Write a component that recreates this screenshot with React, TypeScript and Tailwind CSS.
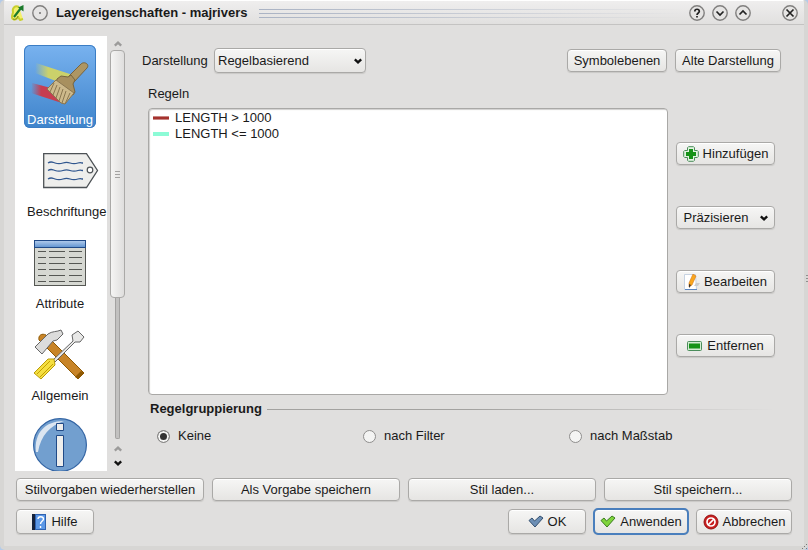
import React from "react";

const btn =
  "flex items-center justify-center rounded-[4px] border border-[#aaa9a7] bg-linear-to-b from-[#f6f6f5] to-[#e6e5e3] shadow-[inset_0_1px_0_#fff,0_1px_1px_#c9c8c6] whitespace-nowrap text-[13px] leading-4";

const small = btn + " h-[23px]";
const large = btn + " h-[25px]";

function Chevron({ up = false, color = "#111" }: { up?: boolean; color?: string }) {
  return (
    <svg width="8" height="6" viewBox="0 0 8 6" aria-hidden="true">
      <path d={up ? "M.8 4.700 4 1.700 7.200 4.700" : "M.8 1.300 4 4.300 7.200 1.300"} fill="none" stroke={color} strokeWidth="2.4" />
    </svg>
  );
}

function LogoIcon() {
  return (
    <svg width="16" height="18" viewBox="0 0 16 18" aria-hidden="true">
      <path
        d="M10 3C6 1 3 4 4 8c0 2-1 2-1 5 0 4 5 3 6 0l2 3 3-1"
        fill="#f4f06a"
        stroke="#c9cf2c"
        strokeWidth="2"
        strokeLinejoin="round"
      />
      <path d="M5 13 12 4" stroke="#1c7a2b" strokeWidth="2.2" />
      <path d="M14.500 1v6.500L9 3.500Z" fill="#1c7a2b" />
      <path d="M4 15c2 1 4 0 5-3" fill="none" stroke="#7d8a2a" />
    </svg>
  );
}

function TitleButton({ label, children }: { label: string; children: React.ReactNode }) {
  return (
    <button type="button" aria-label={label} className="size-4 shrink-0">
      <svg width="16" height="16" viewBox="0 0 16 16" aria-hidden="true">
        <circle cx="8" cy="8" r="7.200" fill="#e6e5e4" stroke="#807f7e" strokeWidth="1.400" />
        <g fill="none" stroke="#222" strokeWidth="1.700">
          {children}
        </g>
      </svg>
    </button>
  );
}

function BrushIcon() {
  return (
    <svg width="58" height="54" viewBox="0 -10 58 54" aria-hidden="true">
      <defs>
        <linearGradient id="yellow">
          <stop offset="0" stopColor="#cbd16b" stopOpacity="0" />
          <stop offset="0.35" stopColor="#cbd16b" />
        </linearGradient>
        <linearGradient id="red">
          <stop offset="0" stopColor="#c63d50" stopOpacity="0" />
          <stop offset="0.3" stopColor="#c63d50" />
        </linearGradient>
      </defs>
      <path d="M5 1 42 13 38 24 4 11Z" fill="url(#yellow)" />
      <path d="M1 21 20 26 34 42 0 31Z" fill="url(#red)" />
      <path d="M38 14 50 2C53-1 59 2 56 6L43 20Z" fill="#ad9664" stroke="#776440" />
      <path d="M26 17 30 14 37 15 40 13 44 18 42 22 44 30 42 33 34 30 25 21Z" fill="#a8905f" stroke="#776440" />
      <path d="M25 18 43 31 34 42 30 41 16 27Z" fill="#cdb98b" stroke="#8a7650" />
      <path d="m23 21-4 9m7-7-4 10m7-8-4 11m7-9-4 12m7-10-4 12m8-10-5 11" stroke="#8a7650" />
    </svg>
  );
}

function LabelIcon() {
  const wave = "c3-2 4-1 7 0s5 1 8 0 4-1 7 0 5 1 8 0 3 0 5 0";
  return (
    <svg width="56" height="36" viewBox="0 0 56 36" aria-hidden="true">
      <path d="M.7.700H43.500L54.500 17.500 43.500 34.500H.7Z" fill="#eeeeec" stroke="#4d5256" strokeWidth="1.300" />
      <circle cx="47" cy="17" r="2.800" fill="#fff" stroke="#4d5256" strokeWidth="1.200" />
      <path d={"M5 10" + wave + "M5 17.500" + wave + "M5 26" + wave} fill="none" stroke="#31578f" strokeWidth="1.300" />
    </svg>
  );
}

function TableIcon() {
  return (
    <svg width="52" height="46" viewBox="0 0 52 46" aria-hidden="true">
      <defs>
        <linearGradient id="head" x2="0" y2="1">
          <stop offset="0" stopColor="#b4cdec" />
          <stop offset="1" stopColor="#5f93d0" />
        </linearGradient>
      </defs>
      <rect x="0.500" y="0.500" width="51" height="45" fill="#d6d8d2" stroke="#555753" />
      <rect x="0.500" y="0.500" width="51" height="7" fill="url(#head)" stroke="#204a87" />
      {[11.5, 17.5, 23.5, 29.5, 35.5, 41.5].map((y) => (
        <path key={y} d={`M4 ${y}H12M15 ${y}H31M35 ${y}H48`} stroke="#555753" />
      ))}
    </svg>
  );
}

function ToolsIcon() {
  return (
    <svg width="52" height="52" viewBox="0 0 52 52" aria-hidden="true">
      <path d="M5 11C4 6 8 4 12 6L50 44 44 50Z" fill="#c88427" stroke="#8f5902" />
      <path d="M44 50 50 44 47 42 41 48Z" fill="#8f5902" />
      <path d="M1 18 14 5C18 2 23 3 27 1L29 5 23 11 19 12 8 25Z" fill="#dcdcdb" stroke="#666" />
      <path d="M19 31 39 12 38 6 44 2 50 8 46 13 41 13 21 33Z" fill="#e8e8e7" stroke="#666" />
      <path d="M0 44 14 30 20 30 21 36 7 50Z" fill="#f5df42" stroke="#b99b08" />
      <path d="M3 45 16 32M6 48 19 35" stroke="#c4a000" />
    </svg>
  );
}

function InfoIcon() {
  return (
    <svg width="54" height="54" viewBox="0 0 54 54" className="shrink-0" aria-hidden="true">
      <circle cx="27" cy="27" r="26.400" fill="#729fcf" stroke="#3465a4" strokeWidth="1.200" />
      <path d="M3 34C1 15 12 3 31 3 17 8 8 17 5 34Z" fill="#dce6f1" />
      <path d="M23.500 5.500h7v7h-7ZM23.500 17.500h7v31h-7Z" fill="#eeeeec" stroke="#204a87" />
    </svg>
  );
}

function PlusIcon() {
  return (
    <svg width="16" height="16" viewBox="0 0 16 16" aria-hidden="true">
      <path
        d="M5.500.700h5l1 1v2.800h2.800l1 1v5l-1 1h-2.800v2.800l-1 1h-5l-1-1v-2.800H1.700l-1-1v-5l1-1h2.800V1.700Z"
        fill="#e2f3e1"
        stroke="#4b8d5b"
      />
      <path d="M6 3h4v3h3v4h-3v3H6v-3H3V6h3Z" fill="#159317" />
    </svg>
  );
}

function EditIcon() {
  return (
    <svg width="16" height="16" viewBox="0 0 16 16" aria-hidden="true">
      <path d="M.5.500h11l1 15H.5Z" fill="#fff" stroke="#c7d3e2" />
      <path d="M1 15.500h12" stroke="#5c86c0" />
      <path d="M12 9h4l-2 3h-4Z" fill="#ccc" />
      <path d="M5 9 9 0 12 2 8 11 5 13Z" fill="#f9a61d" stroke="#d5781b" strokeWidth=".6" />
      <path d="m5 10 2 1-2 3Z" fill="#333" />
    </svg>
  );
}

function MinusIcon() {
  return (
    <svg width="16" height="10" viewBox="0 0 16 10" aria-hidden="true">
      <rect x="0.500" y="0.500" width="14" height="9" rx="1" fill="#d3ecd2" stroke="#4b8d5b" />
      <path d="M2 2.500h11v5H2Z" fill="#159317" />
    </svg>
  );
}

function HelpIcon() {
  return (
    <svg width="15" height="16" viewBox="0 0 15 16" aria-hidden="true">
      <rect x="0" y="0" width="14" height="16" fill="#2f62b0" />
      <rect x="0" y="0" width="3" height="16" fill="#16233c" />
      <path d="M4 1h9v14H4Z" fill="#5c98e6" />
      <path d="M6 5c0-3 5.500-3 5.500 0 0 2-3 2-3 5M8.500 12v2" fill="none" stroke="#fff" strokeWidth="1.400" />
    </svg>
  );
}

function CheckIcon({ fill, stroke }: { fill: string; stroke: string }) {
  return (
    <svg width="16" height="13" viewBox="0 0 16 13" aria-hidden="true">
      <path d="M1 5.500 4 3 6.500 6 12 1 15 3 7 12Z" fill={fill} stroke={stroke} strokeLinejoin="round" />
    </svg>
  );
}

function CancelIcon() {
  return (
    <svg width="16" height="16" viewBox="0 0 16 16" aria-hidden="true">
      <circle cx="8" cy="8" r="7" fill="#c81e1e" stroke="#961111" />
      <circle cx="8" cy="8" r="4" fill="none" stroke="#fff" strokeWidth="1.700" />
      <path d="m5 11 6-6" stroke="#fff" strokeWidth="1.700" />
    </svg>
  );
}

const pages = [
  { name: "Darstellung", icon: <BrushIcon />, wide: false },
  { name: "Beschriftunge", icon: <LabelIcon />, wide: true },
  { name: "Attribute", icon: <TableIcon />, wide: false },
  { name: "Allgemein", icon: <ToolsIcon />, wide: false },
];

export default function App() {
  return (
    <div className="relative h-screen bg-[#b4cbe8] font-['Liberation_Sans',Arial,sans-serif] text-[13px] leading-4 text-[#1a1a1a]">
      <div className="flex h-full flex-col overflow-hidden rounded-[5px] border-x-4 border-b-4 border-[#d7d6d4] bg-[#e0dfde]">
        <header className="-mx-1 flex h-[25px] shrink-0 items-center border-t border-b border-t-white border-b-[#c4c3c2] bg-linear-to-b from-[#efeeee] to-[#e1e0df] pr-[10px] pl-[9px]">
          <LogoIcon />
          <span className="ml-[7px] flex">
            <TitleButton label="Menü">
              <circle cx="8" cy="8" r="0.200" />
            </TitleButton>
          </span>
          <h1 className="ml-2 font-bold">Layereigenschaften - majrivers</h1>
          <div className="mr-[5px] ml-3 flex flex-1 flex-col gap-[3px] pt-px">
            <i className="h-px bg-linear-to-r from-[#aab3c4] to-transparent" />
            <i className="h-px bg-linear-to-r from-[#aab3c4] to-transparent" />
            <i className="h-px bg-linear-to-r from-[#aab3c4] to-transparent" />
          </div>
          <div className="flex gap-[7px]">
            <TitleButton label="Hilfe">
              <path d="M5.800 6.500c0-3 4.500-3 4.500 0C10.300 8 8 8 8 10M8 11v1.500" />
            </TitleButton>
            <TitleButton label="Minimieren">
              <path d="m4.500 6.500 3.500 3.500 3.500-3.500" />
            </TitleButton>
            <TitleButton label="Maximieren">
              <path d="m4.500 9.500 3.500-3.500 3.500 3.500" />
            </TitleButton>
          </div>
          <div className="ml-[31px] flex">
            <TitleButton label="Schließen">
              <path d="m4.500 4.500 7 7m0-7-7 7" />
            </TitleButton>
          </div>
        </header>

        <main className="flex min-h-0 flex-1 pt-[11px] pr-[23px] pl-[11px]">
          <nav className="flex w-[92px] shrink-0 flex-col items-start gap-[9px] overflow-hidden bg-white pt-[9px] pl-[9px]">
            {pages.map((p, i) => (
              <button
                type="button"
                key={p.name}
                className={
                  "flex h-[83px] shrink-0 flex-col rounded-[6px] pl-[3px] " +
                  (p.wide ? "items-start " : "w-[72px] items-center pr-[3px] ") +
                  (i === 0
                    ? "bg-linear-to-b from-[#78b2ef] to-[#3e84cb] text-white shadow-[inset_0_0_0_1px_#3b7dc4]"
                    : "")
                }
              >
                <span className={"flex min-h-0 flex-1 items-center " + (p.wide ? "pl-4" : "")}>{p.icon}</span>
                <span>{p.name}</span>
              </button>
            ))}
            <button type="button" aria-label="Metadaten" className="flex h-[83px] w-[72px] shrink-0 justify-center pt-[5px]">
              <InfoIcon />
            </button>
          </nav>

          <div className="ml-[3px] flex w-[15px] shrink-0 flex-col items-center pt-[5px] pb-[5px]">
            <button type="button" aria-label="Nach oben" className="pb-[3px]">
              <Chevron up color="#9c9b9a" />
            </button>
            <div className="flex w-full flex-1 flex-col items-center">
              <div className="flex h-[248px] w-full flex-col items-center justify-center gap-[2px] rounded-[4px] border border-[#aaa9a7] bg-linear-to-r from-[#f5f5f4] to-[#dfdedd]">
                <i className="h-px w-[5px] bg-[#a3a2a1]" />
                <i className="h-px w-[5px] bg-[#a3a2a1]" />
                <i className="h-px w-[5px] bg-[#a3a2a1]" />
              </div>
              <div className="w-[5px] flex-1 rounded-b-[2px] border border-t-0 border-[#a3a2a1] bg-[#c2c1c0]" />
            </div>
            <button type="button" aria-label="Nach oben blättern" className="pt-[7px]">
              <Chevron up color="#9c9b9a" />
            </button>
            <button type="button" aria-label="Nach unten" className="pt-[8px]">
              <Chevron />
            </button>
          </div>

          <div className="ml-[17px] flex min-w-0 flex-1 flex-col pt-3">
            <div className="flex h-[25px] items-center">
              <label htmlFor="renderer" className="w-[72px]">
                Darstellung
              </label>
              <div className="relative">
                <select id="renderer" className={large + " w-[152px] appearance-none pl-[3px]"}>
                  <option>Regelbasierend</option>
                </select>
                <span className="pointer-events-none absolute inset-y-0 right-[4px] flex items-center">
                  <Chevron />
                </span>
              </div>
              <div className="ml-auto flex gap-2">
                <button type="button" className={small + " w-[100px]"}>Symbolebenen</button>
                <button type="button" className={small + " w-[106px]"}>Alte Darstellung</button>
              </div>
            </div>

            <div className="flex min-h-0 flex-1 flex-col px-[6px] pt-[13px]">
              <h2 className="pb-[6px]">Regeln</h2>
              <div className="flex min-h-0 flex-1 gap-2">
                <ul className="flex-1 rounded-[4px] border border-[#a9a8a6] bg-white pt-px pl-1 shadow-[inset_1px_1px_1px_#d0cfce]">
                  <li className="flex items-center gap-[6px]">
                    <i className="h-1 w-4 border-y border-[#c98784] bg-[#a5322e]" />
                    LENGTH &gt; 1000
                  </li>
                  <li className="flex items-center gap-[6px]">
                    <i className="h-1 w-4 bg-[#8cfbd6]" />
                    LENGTH &lt;= 1000
                  </li>
                </ul>
                <div className="flex w-[99px] flex-col gap-[41px] pt-[34px]">
                  <button type="button" className={small + " gap-1"}>
                    <PlusIcon />
                    Hinzufügen
                  </button>
                  <button type="button" className={small + " gap-[11px]"}>
                    Präzisieren
                    <Chevron />
                  </button>
                  <button type="button" className={small + " gap-1"}>
                    <EditIcon />
                    Bearbeiten
                  </button>
                  <button type="button" className={small + " gap-1"}>
                    <MinusIcon />
                    Entfernen
                  </button>
                </div>
              </div>
            </div>

            <fieldset className="shrink-0 pt-[6px] pr-[6px] pb-[27px] pl-2">
              <div className="flex items-center gap-[5px]">
                <h2 className="font-bold" id="grouping">Regelgruppierung</h2>
                <i className="h-px flex-1 bg-linear-to-r from-[#a3a2a0] from-40% to-transparent" />
              </div>
              <div role="radiogroup" aria-labelledby="grouping" className="grid grid-cols-3 pt-[11px] pl-[7px]">
                {["Keine", "nach Filter", "nach Maßstab"].map((t, i) => (
                  <label key={t} className="flex items-center gap-2">
                    <input
                      type="radio"
                      name="group"
                      defaultChecked={i === 0}
                      className="size-[13px] appearance-none rounded-full border border-[#8f8e8d] bg-[#f4f4f3] shadow-[inset_0_0_0_2px_#f4f4f3] checked:bg-[#333]"
                    />
                    {t}
                  </label>
                ))}
              </div>
            </fieldset>
          </div>
        </main>

        <footer className="flex shrink-0 flex-col gap-2 pt-[7px] pr-3 pb-3 pl-3">
          <div className="grid grid-cols-4 gap-2">
            <button type="button" className={small}>Stilvorgaben wiederherstellen</button>
            <button type="button" className={small}>Als Vorgabe speichern</button>
            <button type="button" className={small}>Stil laden...</button>
            <button type="button" className={small}>Stil speichern...</button>
          </div>
          <div className="flex gap-2">
            <button type="button" className={large + " mr-auto w-[78px] gap-1"}>
              <HelpIcon />
              Hilfe
            </button>
            <button type="button" className={large + " w-[78px] gap-1"}>
              <CheckIcon fill="#6d8fb5" stroke="#34506f" />
              OK
            </button>
            <button type="button" className={large + " w-[94px] gap-1 outline-2 -outline-offset-1 outline-[#4a7fbd]"}>
              <CheckIcon fill="#7fd43c" stroke="#3b7d1f" />
              Anwenden
            </button>
            <button type="button" className={large + " w-[96px] gap-1"}>
              <CancelIcon />
              Abbrechen
            </button>
          </div>
        </footer>
      </div>
      <svg className="absolute top-1/2 right-0" width="2" height="8" viewBox="0 0 2 8" aria-hidden="true">
        <path d="M0 .5h2M0 3.500h2M0 6.500h2" stroke="#8f8e8d" />
      </svg>
      <svg className="absolute right-0 bottom-0" width="6" height="6" viewBox="0 0 6 6" aria-hidden="true">
        <path d="M4 0h1v1H4ZM2 2h1v1H2ZM0 4h1v1H0ZM4 4h1v1H4Z" fill="#777" />
      </svg>
    </div>
  );
}
